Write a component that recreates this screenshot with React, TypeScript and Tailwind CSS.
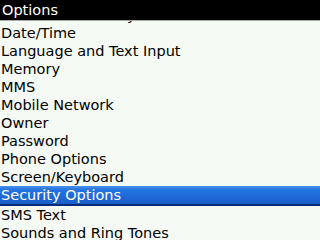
import React from "react";

const items = [
  "Custom Dictionary",
  "Date/Time",
  "Language and Text Input",
  "Memory",
  "MMS",
  "Mobile Network",
  "Owner",
  "Password",
  "Phone Options",
  "Screen/Keyboard",
  "Security Options",
  "SMS Text",
  "Sounds and Ring Tones",
  "Status",
];

export default function App() {
  return (
    <div
      className="w-[320px] h-[240px] overflow-hidden flex flex-col bg-[#f6faf4]"
      style={{ fontFamily: '"DejaVu Sans", sans-serif' }}
    >
      <div className="h-[20px] shrink-0 bg-black text-white text-[14.5px] leading-[20px] pl-[2px] relative z-10">
        Options
      </div>
      <div className="h-[1px] shrink-0 bg-[#a8aaa8] relative z-10" />
      <div className="flex-1 overflow-hidden">
        <div className="flex flex-col mt-[-15px]">
          {items.map((t) =>
            t === "Security Options" ? (
              <div
                key={t}
                className="h-[18px] leading-[18px] text-[14.5px] pl-[1px] text-white bg-[linear-gradient(#4b93ea,#2574e0_20%,#1f6ad8_55%,#1a5dc8)] border-b-2 border-[#0b2a78] box-content"
              >
                {t}
              </div>
            ) : (
              <div key={t} className="h-[18px] leading-[18px] text-[14.5px] pl-[1px] text-black">
                {t}
              </div>
            )
          )}
        </div>
      </div>
    </div>
  );
}
